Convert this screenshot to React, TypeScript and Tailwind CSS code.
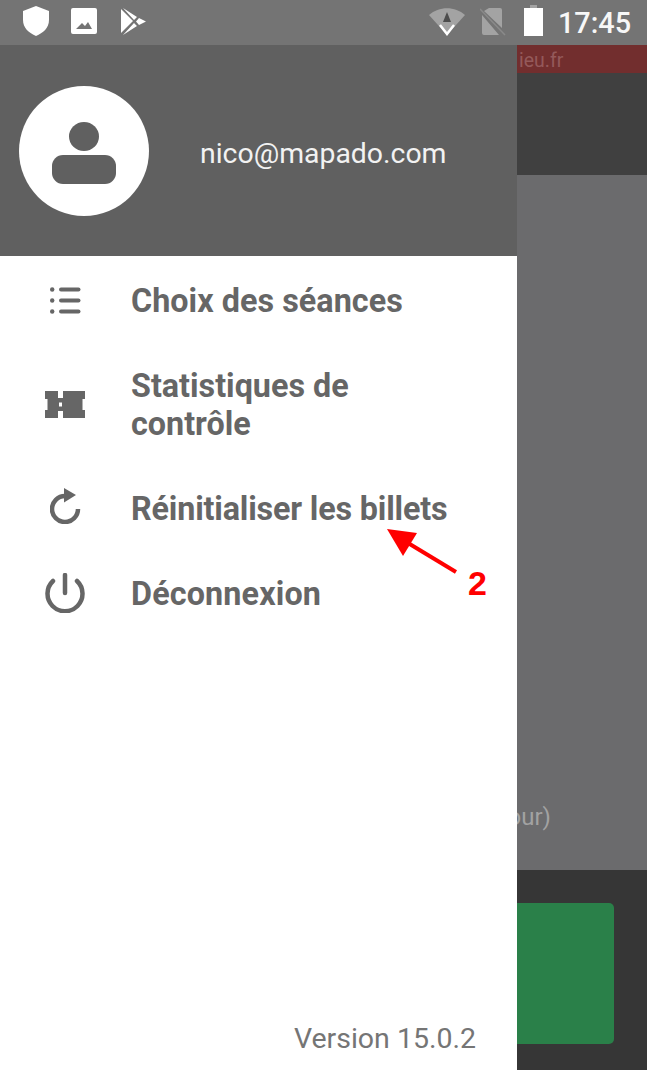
const menuClass = 'text-[32.3px] leading-[38px] font-bold text-[#666666]';

const ShieldIcon = () => (
  <svg width="26" height="30" viewBox="0 0 26 30" className="ml-[23px] mt-[6px]">
    <path d="M13 0 L26 5 V14 C26 22 20 27 13 30 C6 27 0 22 0 14 V5 Z" fill="#fff" />
  </svg>
);

const ImageIcon = () => (
  <svg width="26" height="26" viewBox="0 0 26 26" className="ml-[22px] mt-[8px]">
    <path
      fillRule="evenodd"
      d="M2 0 H24 A2 2 0 0 1 26 2 V24 A2 2 0 0 1 24 26 H2 A2 2 0 0 1 0 24 V2 A2 2 0 0 1 2 0 Z M5 21 H21 L17 14 L14 18 L11 15 Z"
      fill="#fff"
    />
  </svg>
);

const PlayIcon = () => (
  <svg width="26" height="27" viewBox="0 0 26 27" className="ml-[24px] mt-[8px]">
    <path d="M0 1 L12 13 L0 25 Z" fill="#fff" />
    <path d="M2 0 L16 9 L13 12 Z M2 27 L16 18 L13 15 Z M18 10 L25 13.5 L18 17 L15 13.5 Z" fill="#fff" />
  </svg>
);

const WifiIcon = () => (
  <svg width="36" height="28" viewBox="0 0 36 28" className="mt-[8px]">
    <path d="M0 7 C10 -2 26 -2 36 7 L18 27 Z" fill="#a3a3a3" />
    <path d="M18 4 L22 14 H14 Z" fill="#4d4d4d" />
    <path d="M11 17 L18 26 L25 17" fill="none" stroke="#fff" strokeWidth="2.5" />
  </svg>
);

const SimIcon = () => (
  <svg width="26" height="28" viewBox="0 0 26 28" className="ml-[15px] mt-[8px]">
    <path d="M9 0 H20 A2 2 0 0 1 22 2 V20 L4 3 Z M2 7 L19 27 H4 A2 2 0 0 1 2 25 Z" fill="#a3a3a3" />
    <path d="M0 1 L25 27" stroke="#8a8a8a" strokeWidth="1.5" />
  </svg>
);

const BatteryIcon = () => (
  <svg width="19" height="31" viewBox="0 0 19 31" className="ml-[18px] mt-[5px]">
    <path d="M6 0 H13 V3 H6 Z" fill="#a3a3a3" />
    <path d="M0 3 H19 V31 H0 Z" fill="#fff" />
  </svg>
);

const UserIcon = () => (
  <svg width="64" height="62" viewBox="0 0 64 62" className="mt-[4px]">
    <ellipse cx="32" cy="14.5" rx="15" ry="14.5" fill="#606060" />
    <rect x="0" y="33" width="64" height="29" rx="11" fill="#606060" />
  </svg>
);

const ListIcon = () => (
  <svg width="31" height="27" viewBox="0 0 31 27">
    <g fill="#666666">
      <circle cx="2.2" cy="2.5" r="2.2" />
      <circle cx="2.2" cy="13.5" r="2.2" />
      <circle cx="2.2" cy="24.5" r="2.2" />
      <rect x="9" y="0.5" width="21.5" height="4" rx="2" />
      <rect x="9" y="11.5" width="21.5" height="4" rx="2" />
      <rect x="9" y="22.5" width="21.5" height="4" rx="2" />
    </g>
  </svg>
);

const TicketIcon = () => (
  <svg width="40" height="27" viewBox="0 0 40 27">
    <path
      d="M0 0 H13 V7 H18 V0 H40 V8 H37.5 V19 H40 V27 H18 V20 H13 V27 H0 V19 H2.5 V8 H0 Z M14 11.5 V15.5 H17 V11.5 Z"
      fill="#666666"
      fillRule="evenodd"
    />
  </svg>
);

const RefreshIcon = () => (
  <svg width="31" height="36" viewBox="0 0 31 36" className="-mt-[6px]">
    <path d="M15 8 A13 13 0 1 0 28 21" fill="none" stroke="#666666" strokeWidth="4.5" />
    <path d="M14 0 L26 7 L14 14.5 Z" fill="#666666" />
  </svg>
);

const PowerIcon = () => (
  <svg width="40" height="40" viewBox="0 0 40 40" className="-mt-[2px]">
    <path
      d="M8 8 A17.5 17.5 0 1 0 32 8"
      fill="none"
      stroke="#666666"
      strokeWidth="4.5"
      strokeLinecap="round"
    />
    <path d="M20 2 V20" stroke="#666666" strokeWidth="4.5" strokeLinecap="round" />
  </svg>
);

const items = [
  { label: 'Choix des séances', icon: <ListIcon />, extra: 'tracking-[0.05px]' },
  { label: 'Statistiques de contrôle', icon: <TicketIcon />, extra: '' },
  { label: 'Réinitialiser les billets', icon: <RefreshIcon />, extra: 'tracking-[-0.16px]' },
  { label: 'Déconnexion', icon: <PowerIcon />, extra: 'tracking-[0.15px]' },
];

export default function App() {
  return (
    <div className="relative flex h-[1070px] w-[647px] flex-col overflow-hidden font-['Roboto',sans-serif]">
      {/* Status bar */}
      <div className="flex h-[45px] shrink-0 bg-[#747474]">
        <ShieldIcon />
        <ImageIcon />
        <PlayIcon />
        <div className="ml-auto flex">
          <WifiIcon />
          <SimIcon />
          <BatteryIcon />
          <span className="ml-[15px] mr-[16px] mt-[6px] text-[28.8px] leading-[34px] font-medium text-[#f7f7f7]">
            17:45
          </span>
        </div>
      </div>

      <div className="flex flex-1">
        {/* Drawer */}
        <div className="flex w-[517px] shrink-0 flex-col bg-white">
          <div className="flex h-[211px] items-center bg-[#606060] pl-[19px] pt-[1px]">
            <div className="flex h-[130px] w-[130px] items-center justify-center rounded-full bg-white">
              <UserIcon />
            </div>
            <span className="ml-[51px] mt-[6px] text-[28.4px] text-[#f2f2f2]">nico@mapado.com</span>
          </div>

          <div className="flex flex-col gap-[46px] pt-[25px]">
            {items.map((item) => (
              <div key={item.label} className="flex items-center">
                <div className="ml-[45px] flex w-[40px] justify-center">{item.icon}</div>
                <span className={`ml-[46px] w-[330px] pt-[1px] ${menuClass} ${item.extra}`}>{item.label}</span>
              </div>
            ))}
          </div>

          <div className="mt-auto pb-[14px] pr-[41px] text-right text-[28.5px] leading-[34px] text-[#757575]">
            Version 15.0.2
          </div>
        </div>

        {/* App behind the drawer */}
        <div className="flex min-w-0 flex-1 flex-col overflow-hidden">
          <div className="flex h-[28px] items-center bg-[#722e2e] pl-[2px] pt-[3px] text-[19.5px] whitespace-nowrap text-[#94595a]">
            ieu.fr
          </div>
          <div className="h-[102px] bg-[#404040]" />
          <div className="flex h-[695px] items-end bg-[#6b6b6d] pb-[39px] text-[24px] leading-[28px] whitespace-nowrap text-[#a2a2a2]">
            <span className="-ml-[23px]">pour)</span>
          </div>
          <div className="flex-1 bg-[#363636] pr-[33px] pt-[33px]">
            <div className="h-[141px] rounded-r-[5px] bg-[#2a8049]" />
          </div>
        </div>
      </div>

      {/* Annotation */}
      <svg
        width="90"
        height="60"
        viewBox="0 0 90 60"
        className="absolute left-[380px] top-[522px]"
      >
        <path d="M76 50 L28 21" stroke="#ff0000" strokeWidth="4" />
        <path d="M7 7 L37 11 L23 34 Z" fill="#ff0000" />
      </svg>
      <span className="absolute left-[468px] top-[564px] text-[34px] leading-[38px] font-bold text-[#ff0000] font-['Liberation_Sans',sans-serif]">
        2
      </span>
    </div>
  );
}
